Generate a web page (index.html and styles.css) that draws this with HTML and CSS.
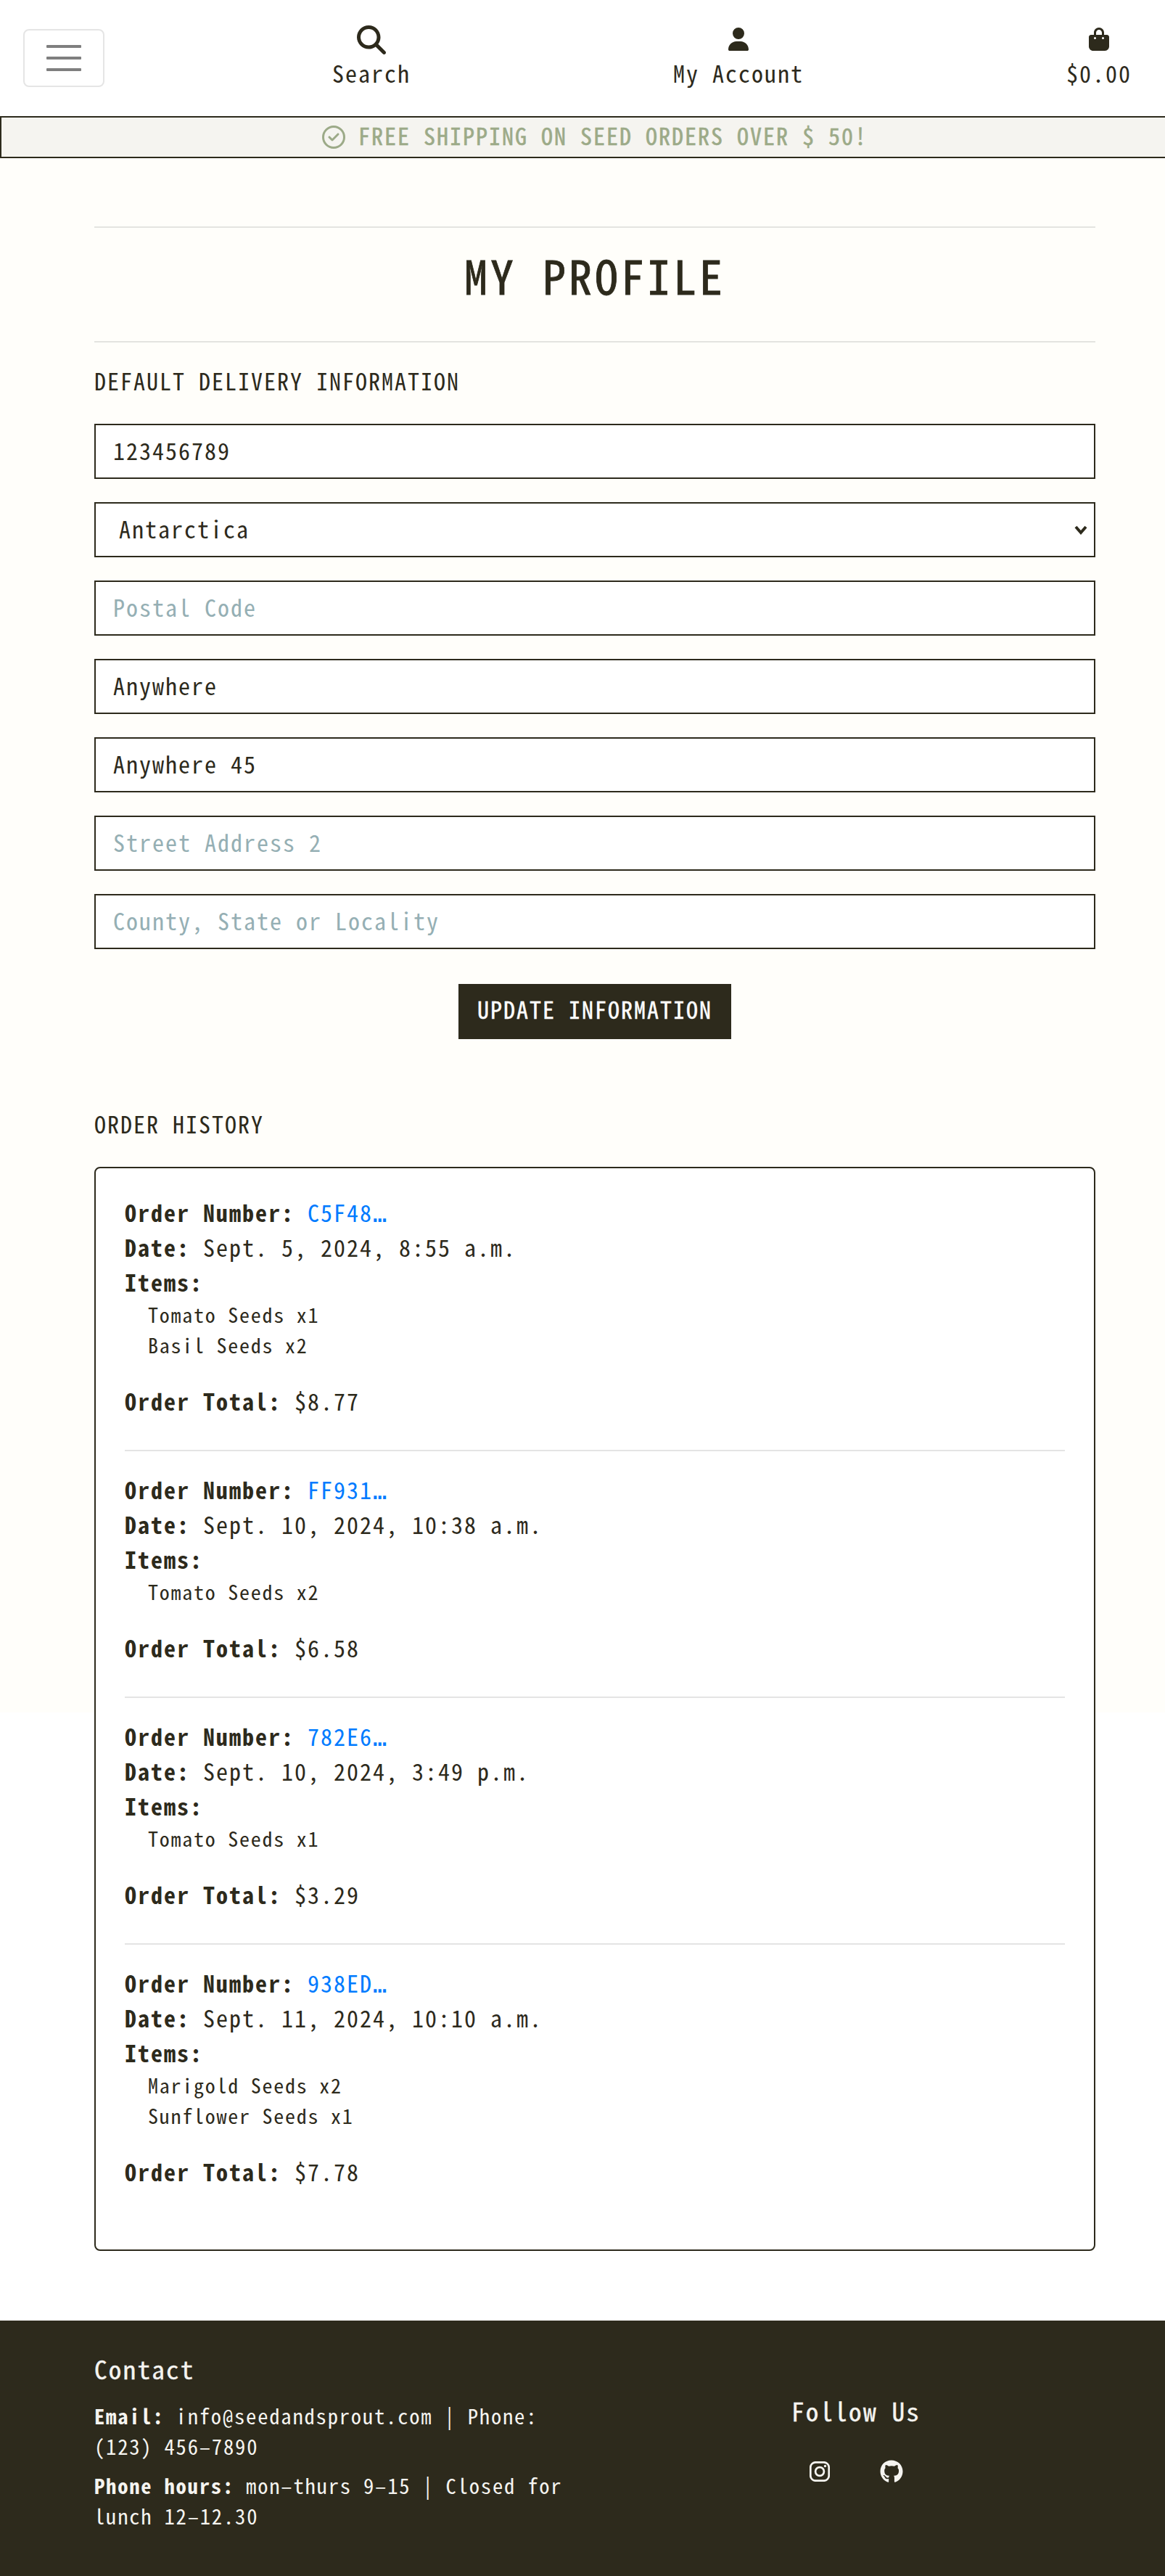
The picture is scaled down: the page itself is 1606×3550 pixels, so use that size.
FILE: index.html
```html
<!DOCTYPE html>
<html lang="en">
<head>
<meta charset="utf-8">
<title>My Profile</title>
<link rel="stylesheet" href="styles.css">
</head>
<body>
<header class="topbar">
  <button class="menu-toggle" aria-label="Menu"><span class="bar"></span><span class="bar"></span><span class="bar"></span></button>
  <nav class="nav">
    <a class="nav-item"><span class="nav-icon nav-icon-search"><svg width="40" height="40" viewBox="0 0 512 512"><path d="M416 208c0 45.9-14.9 88.3-40 122.7L502.6 457.4c12.5 12.5 12.5 32.8 0 45.3s-32.8 12.5-45.3 0L330.7 376c-34.4 25.2-76.8 40-122.7 40C93.1 416 0 322.9 0 208S93.1 0 208 0S416 93.1 416 208zM208 352a144 144 0 1 0 0-288 144 144 0 1 0 0 288z"/></svg></span><span>Search</span></a>
    <a class="nav-item"><span class="nav-icon"><svg width="28" height="32" viewBox="0 0 448 512"><path d="M224 256A128 128 0 1 0 224 0a128 128 0 1 0 0 256zm-45.7 48C79.8 304 0 383.8 0 482.3C0 498.7 13.3 512 29.7 512H418.3c16.4 0 29.7-13.3 29.7-29.7C448 383.8 368.2 304 269.7 304H178.3z"/></svg></span><span>My Account</span></a>
    <a class="nav-item"><span class="nav-icon"><svg width="28" height="32" viewBox="0 0 448 512"><path d="M160 112c0-35.3 28.7-64 64-64s64 28.7 64 64v48H160V112zm-48 48H48c-26.5 0-48 21.5-48 48V416c0 53 43 96 96 96H352c53 0 96-43 96-96V208c0-26.5-21.5-48-48-48H336V112C336 50.1 285.9 0 224 0S112 50.1 112 112v48zm24 48a24 24 0 1 1 0 48 24 24 0 1 1 0-48zm152 24a24 24 0 1 1 48 0 24 24 0 1 1 -48 0z"/></svg></span><span>$0.00</span></a>
  </nav>
</header>
<div class="banner">
  <svg width="32" height="32" viewBox="0 0 512 512"><path d="M256 48a208 208 0 1 1 0 416 208 208 0 1 1 0-416zm0 464A256 256 0 1 0 256 0a256 256 0 1 0 0 512zM369 209c9.4-9.4 9.4-24.6 0-33.9s-24.6-9.4-33.9 0l-111 111-47-47c-9.4-9.4-24.6-9.4-33.9 0s-9.4 24.6 0 33.9l64 64c9.4 9.4 24.6 9.4 33.9 0L369 209z"/></svg>
  <span class="banner-text">FREE SHIPPING ON SEED ORDERS OVER $ 50!</span>
</div>
<main class="container">
  <h1 class="page-title">MY PROFILE</h1>
  <p class="section-label">DEFAULT DELIVERY INFORMATION</p>
  <form class="profile-form">
    <input class="field" value="123456789">
    <div class="select-wrap">
      <select class="field field-select"><option>Antarctica</option></select>
      <svg class="chevron" width="18" height="13" viewBox="0 0 18 13"><path d="M2 2L9 10L16 2"/></svg>
    </div>
    <input class="field" placeholder="Postal Code">
    <input class="field" value="Anywhere">
    <input class="field" value="Anywhere 45">
    <input class="field" placeholder="Street Address 2">
    <input class="field" placeholder="County, State or Locality">
    <button class="submit" type="button">UPDATE INFORMATION</button>
  </form>
  <p class="section-label history-label">ORDER HISTORY</p>
  <section class="orders">
    <article class="order">
      <p><b>Order Number:</b> <a class="link">C5F48<span class="ellipsis">…</span></a></p>
      <p><b>Date:</b> Sept. 5, 2024, 8:55 a.m.</p>
      <p><b>Items:</b></p>
      <ul class="items"><li>Tomato Seeds x1</li><li>Basil Seeds x2</li></ul>
      <p><b>Order Total:</b> $8.77</p>
    </article>
    <article class="order">
      <p><b>Order Number:</b> <a class="link">FF931<span class="ellipsis">…</span></a></p>
      <p><b>Date:</b> Sept. 10, 2024, 10:38 a.m.</p>
      <p><b>Items:</b></p>
      <ul class="items"><li>Tomato Seeds x2</li></ul>
      <p><b>Order Total:</b> $6.58</p>
    </article>
    <article class="order">
      <p><b>Order Number:</b> <a class="link">782E6<span class="ellipsis">…</span></a></p>
      <p><b>Date:</b> Sept. 10, 2024, 3:49 p.m.</p>
      <p><b>Items:</b></p>
      <ul class="items"><li>Tomato Seeds x1</li></ul>
      <p><b>Order Total:</b> $3.29</p>
    </article>
    <article class="order">
      <p><b>Order Number:</b> <a class="link">938ED<span class="ellipsis">…</span></a></p>
      <p><b>Date:</b> Sept. 11, 2024, 10:10 a.m.</p>
      <p><b>Items:</b></p>
      <ul class="items"><li>Marigold Seeds x2</li><li>Sunflower Seeds x1</li></ul>
      <p><b>Order Total:</b> $7.78</p>
    </article>
  </section>
</main>
<footer class="footer">
  <div class="contact">
    <h2 class="footer-title">Contact</h2>
    <p><b>Email:</b> info@seedandsprout.com | Phone:<br>(123) 456–7890</p>
    <p><b>Phone hours:</b> mon–thurs 9–15 | Closed for<br>lunch 12–12.30</p>
  </div>
  <div class="follow">
    <h2 class="footer-title">Follow Us</h2>
    <div class="social">
      <svg width="28" height="28" viewBox="0 0 28 28"><rect class="line" x="1.3" y="1.3" width="25.4" height="25.4" rx="7"/><circle class="line" cx="14" cy="14" r="5.9"/><circle cx="21.5" cy="6.5" r="1.7"/></svg>
      <svg width="32" height="32" viewBox="0 0 496 512"><path d="M165.9 397.4c0 2-2.3 3.6-5.2 3.6-3.3.3-5.6-1.3-5.6-3.6 0-2 2.3-3.6 5.2-3.6 3-.3 5.6 1.3 5.6 3.6zm-31.1-4.5c-.7 2 1.3 4.3 4.3 4.9 2.6 1 5.6 0 6.2-2s-1.3-4.3-4.3-5.2c-2.6-.7-5.5.3-6.2 2.3zm44.2-1.7c-2.9.7-4.9 2.6-4.6 4.9.3 2 2.9 3.3 5.9 2.6 2.9-.7 4.9-2.6 4.6-4.6-.3-1.9-3-3.2-5.9-2.9zM244.8 8C106.1 8 0 113.3 0 252c0 110.9 69.8 205.8 169.5 239.2 12.8 2.3 17.3-5.6 17.3-12.1 0-6.2-.3-40.4-.3-61.4 0 0-70 15-84.7-29.8 0 0-11.4-29.1-27.8-36.6 0 0-22.9-15.7 1.6-15.4 0 0 24.9 2 38.6 25.8 21.9 38.6 58.6 27.5 72.9 20.9 2.3-16 8.8-27.1 16-33.7-55.9-6.2-112.3-14.3-112.3-110.5 0-27.5 7.6-41.3 23.6-58.9-2.6-6.5-11.1-33.3 2.6-67.9 20.9-6.5 69 27 69 27 20-5.6 41.5-8.5 62.8-8.5s42.8 2.9 62.8 8.5c0 0 48.1-33.6 69-27 13.7 34.7 5.2 61.4 2.6 67.9 16 17.7 25.8 31.5 25.8 58.9 0 96.5-58.9 104.2-114.8 110.5 9.2 7.9 17 22.9 17 46.4 0 33.7-.3 75.4-.3 83.6 0 6.5 4.6 14.4 17.3 12.1C428.2 457.8 496 362.9 496 252 496 113.3 383.5 8 244.8 8z"/></svg>
    </div>
  </div>
</footer>
</body>
</html>
```
FILE: styles.css
```css
:root {
  --ink: #2d2a1c;
  --paper: #fffefa;
  --mist: #f5f4f0;
  --sage: #9caa88;
}
* {
  box-sizing: border-box;
  margin: 0;
  padding: 0;
  letter-spacing: 0.0625em;
}
body {
  font: 400 32px/48px "Noto Sans Mono CJK JP", "Liberation Mono", monospace;
  color: var(--ink);
  background: linear-gradient(var(--paper) 2360px, #fff 2360px);
}
svg { display: block; fill: currentColor; flex: none; }

.topbar {
  display: flex;
  height: 160px;
  padding-left: 32px;
  align-items: center;
  background: #fff;
}
.menu-toggle {
  display: flex;
  flex: none;
  flex-direction: column;
  align-items: center;
  justify-content: center;
  gap: 12px;
  width: 112px;
  height: 80px;
  border: 2px solid #e5e5e5;
  border-radius: 8px;
  background: none;
}
.bar { width: 48px; height: 4px; border-radius: 1px; background: #7f7f7f; }
.nav { display: flex; gap: 362px; margin-left: 314px; padding-bottom: 6px; }
.nav-item { display: flex; flex-direction: column; align-items: center; white-space: nowrap; }
.nav-icon { display: flex; align-items: center; height: 46px; padding-top: 2px; }
.nav-icon-search { padding-top: 4px; }

.banner {
  display: flex;
  align-items: center;
  justify-content: center;
  gap: 18px;
  height: 58px;
  padding-left: 32px;
  border: 2px solid var(--ink);
  border-right: 0;
  background: var(--mist);
  color: var(--sage);
}
.banner-text { padding-bottom: 6px; -webkit-text-stroke: 0.5px currentColor; }

.container { width: 1380px; margin-left: 130px; padding-top: 94px; }
.page-title {
  height: 160px;
  padding-top: 26px;
  border-top: 2px solid #e4e4e0;
  border-bottom: 2px solid #e4e4e0;
  font-size: 64px;
  font-weight: 400;
  line-height: 76px;
  text-align: center;
  -webkit-text-stroke: 0.8px currentColor;
}
.section-label { margin-top: 28px; }
.profile-form { display: flex; flex-direction: column; gap: 32px; margin-top: 36px; }
.field {
  width: 100%;
  height: 76px;
  padding: 10px 24px 14px;
  border: 2px solid var(--ink);
  border-radius: 0;
  background: #fff;
  color: var(--ink);
  font: inherit;
}
.field::placeholder { color: #95afb4; opacity: 1; }
.select-wrap { position: relative; display: flex; }
.field-select { appearance: none; padding-left: 32px; }
.chevron { position: absolute; right: 11px; top: 32px; fill: none; stroke: var(--ink); stroke-width: 4; }
.submit {
  align-self: center;
  width: 376px;
  height: 76px;
  margin-top: 16px;
  padding-bottom: 8px;
  border: 0;
  background: var(--ink);
  color: #fff;
  font: inherit;
  -webkit-text-stroke: 0.4px currentColor;
}
.history-label { margin-top: 92px; }
.orders {
  height: 1494px;
  margin-top: 36px;
  padding: 36px 40px;
  border: 2px solid var(--ink);
  border-radius: 8px;
  background: #fff;
}
.order + .order { margin-top: 44px; padding-top: 28px; border-top: 2px solid #e4e4e4; }
.link { color: #007bff; }
.ellipsis { font-family: "DejaVu Sans Mono", monospace; line-height: 1; letter-spacing: -0.04em; }
.items { list-style: none; padding: 0 0 32px 32px; font-size: 28px; line-height: 42px; }

.footer {
  display: flex;
  height: 352px;
  margin-top: 96px;
  padding-left: 130px;
  background: var(--ink);
  color: var(--mist);
  font-size: 28.6px;
  line-height: 42px;
}
.contact { width: 700px; padding-top: 44px; }
.contact p { margin-bottom: 12px; }
.footer-title {
  margin-bottom: 22px;
  font-size: 35.2px;
  font-weight: 400;
  line-height: 44px;
  -webkit-text-stroke: 0.4px currentColor;
}
.follow { display: flex; flex-direction: column; align-items: center; width: 700px; padding-top: 102px; }
.social { display: flex; align-items: center; gap: 69px; padding-top: 24px; }
.line { fill: none; stroke: currentColor; stroke-width: 2.7; }
```
